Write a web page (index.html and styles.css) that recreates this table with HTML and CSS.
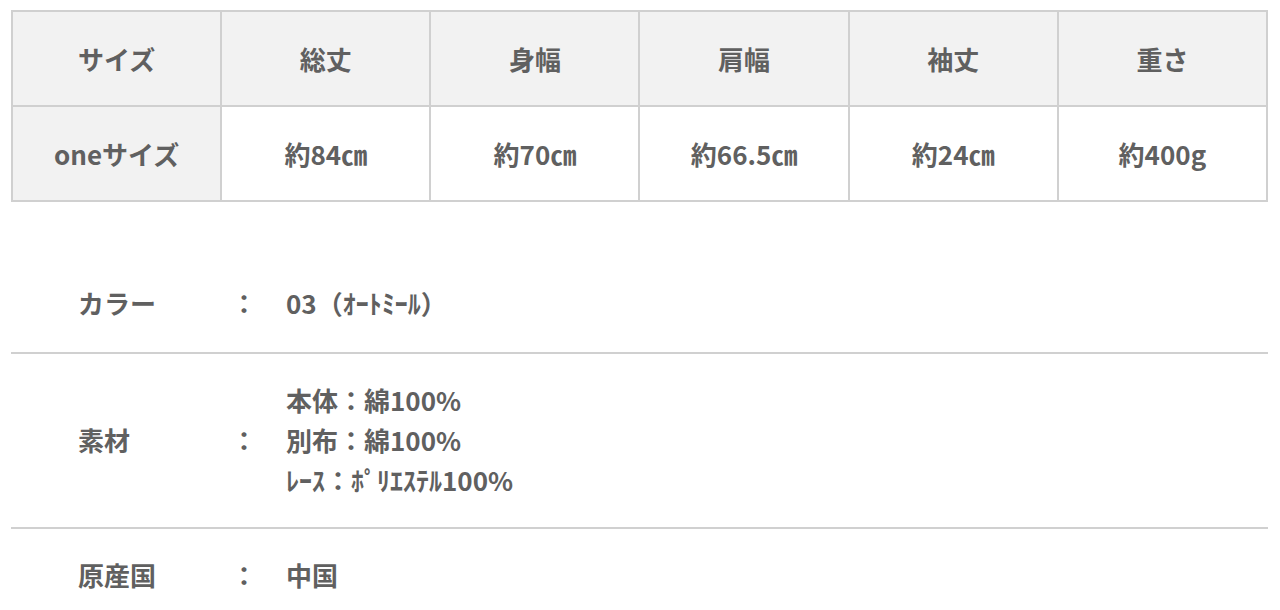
FILE: index.html
```html
<!DOCTYPE html>
<html lang="ja">
<head>
<meta charset="utf-8">
<link rel="stylesheet" href="styles.css">
</head>
<body>
<div class="page">
  <table class="size-table">
    <thead>
      <tr>
        <th>サイズ</th><th>総丈</th><th>身幅</th><th>肩幅</th><th>袖丈</th><th>重さ</th>
      </tr>
    </thead>
    <tbody>
      <tr>
        <th>oneサイズ</th><td>約84㎝</td><td>約70㎝</td><td>約66.5㎝</td><td>約24㎝</td><td>約400g</td>
      </tr>
    </tbody>
  </table>

  <div class="specs">
    <div class="spec-row">
      <div class="spec-label">カラー</div>
      <div class="spec-colon">：</div>
      <div class="spec-value">03（ｵｰﾄﾐｰﾙ）</div>
    </div>
    <div class="spec-row">
      <div class="spec-label">素材</div>
      <div class="spec-colon">：</div>
      <div class="spec-value">
        <div>本体：綿100%</div>
        <div>別布：綿100%</div>
        <div>ﾚｰｽ：ﾎﾟﾘｴｽﾃﾙ100%</div>
      </div>
    </div>
    <div class="spec-row">
      <div class="spec-label">原産国</div>
      <div class="spec-colon">：</div>
      <div class="spec-value">中国</div>
    </div>
  </div>
</div>
</body>
</html>
```

FILE: styles.css
```css
html, body {
  margin: 0;
  padding: 0;
  background: #ffffff;
}
body {
  font-family: "Noto Sans CJK JP", "Noto Sans", sans-serif;
  font-weight: 700;
  color: #606060;
}
.page {
  padding: 10px 12px 0 11px;
}
.size-table {
  width: 1257px;
  border-collapse: collapse;
  table-layout: fixed;
  border: 2px solid #d0d0d0;
}
.size-table th,
.size-table td {
  border: 2px solid #d0d0d0;
  text-align: center;
  vertical-align: middle;
  font-size: 26px;
  font-weight: 700;
  color: #606060;
  padding: 0;
}
.size-table thead th {
  height: 93px;
  background: #f2f2f2;
}
.size-table tbody th {
  background: #f2f2f2;
}
.size-table tbody th,
.size-table tbody td {
  height: 93px;
}
.size-table tbody td {
  background: #ffffff;
}
.specs {
  margin-top: 54px;
  width: 1257px;
}
.spec-row {
  display: flex;
  align-items: center;
  padding: 26px 0 27px 67px;
  font-size: 26px;
  line-height: 40px;
}
.spec-row:first-child {
  padding-top: 27px;
  padding-bottom: 29px;
}
.spec-row + .spec-row {
  border-top: 2px solid #d0d0d0;
}
.spec-label {
  width: 153px;
}
.spec-colon {
  width: 55px;
}
.spec-value {
  flex: 1;
}
```
